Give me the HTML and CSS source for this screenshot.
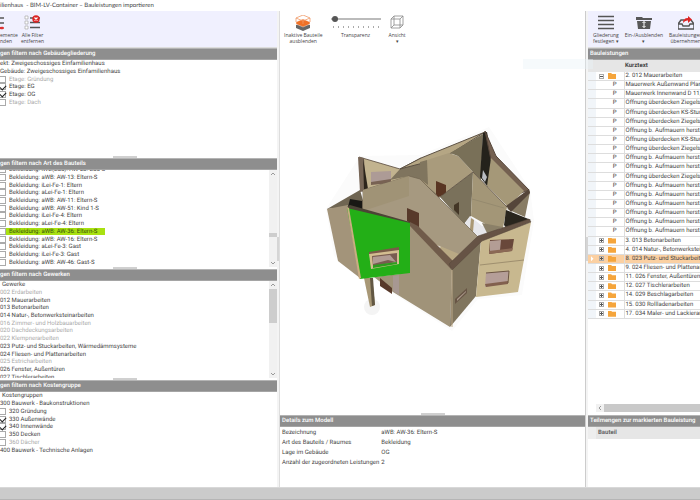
FILE: index.html
```html
<!DOCTYPE html>
<html lang="de">
<head>
<meta charset="utf-8">
<title>BIM-LV-Container – Bauleistungen importieren</title>
<link rel="stylesheet" href="styles.css">
</head>
<body>
<header class="titlebar">ilienhaus &nbsp;- BIM-LV-Container – Bauleistungen importieren</header>
<main class="workspace">
  <aside class="filters">
    <div class="toolbar toolbar-left">
      <button class="tool tool-cut" type="button">
        <svg class="icon" viewBox="0 0 16 16"><path d="M-4 3h8M-4 8h8" stroke="#555" stroke-width="1.5"/><path d="M-2 13h3" stroke="#555" stroke-width="1.5"/><path d="M0 12q4-1 4 1t-4 1z" fill="#d33"/></svg>
        <span>emente<br>nden</span>
      </button>
      <button class="tool" type="button">
        <svg class="icon" viewBox="0 0 16 16"><g fill="#fff" stroke="#aaa" stroke-width=".7"><path d="M1 1h3v3H1zM1 6h3v3H1zM1 11h3v3H1z"/></g><path d="M6 3h10M6 7.500h10M6 12.500h10" stroke="#555" stroke-width="1.500"/><circle cx="12" cy="4" r="3.700" fill="#dc2424"/><path d="M10.500 2.500l3 3m0-3l-3 3" stroke="#fff" stroke-width="1.200"/></svg>
        <span>Alle Filter<br>entfernen</span>
      </button>
    </div>
    <section class="panel">
      <h2>gen filtern nach Gebäudegliederung</h2>
      <div class="panel-body">
        <ul class="tree">
          <li>ekt: Zweigeschossiges Einfamilienhaus</li>
          <li>Gebäude: Zweigeschossiges Einfamilienhaus</li>
          <li class="off"><label><input type="checkbox">Etage: Gründung</label></li>
          <li><label><input type="checkbox" checked>Etage: EG</label></li>
          <li><label><input type="checkbox" checked>Etage: OG</label></li>
          <li class="off"><label><input type="checkbox">Etage: Dach</label></li>
        </ul>
      </div>
      <i class="grip"></i>
    </section>
    <section class="panel">
      <h2>gen filtern nach Art des Bauteils</h2>
      <div class="panel-body scrolled">
        <ul class="tree tree-long">
          <li><label><input type="checkbox">Bekleidung: iWB(Bad): AW-23: Bad-S</label></li>
          <li><label><input type="checkbox">Bekleidung: aWB: AW-13: Eltern-S</label></li>
          <li><label><input type="checkbox">Bekleidung: iLei-Fe-1: Eltern</label></li>
          <li><label><input type="checkbox">Bekleidung: aLei-Fe-1: Eltern</label></li>
          <li><label><input type="checkbox">Bekleidung: aWB: AW-11: Eltern-S</label></li>
          <li><label><input type="checkbox">Bekleidung: aWB: AW-51: Kind 1-S</label></li>
          <li><label><input type="checkbox">Bekleidung: iLei-Fe-4: Eltern</label></li>
          <li><label><input type="checkbox">Bekleidung: aLei-Fe-4: Eltern</label></li>
          <li><label class="marked"><input type="checkbox">Bekleidung: aWB: AW-36: Eltern-S</label></li>
          <li><label><input type="checkbox">Bekleidung: aWB: AW-16: Eltern-S</label></li>
          <li><label><input type="checkbox">Bekleidung: aLei-Fe-3: Gast</label></li>
          <li><label><input type="checkbox">Bekleidung: iLei-Fe-3: Gast</label></li>
          <li><label><input type="checkbox">Bekleidung: aWB: AW-46: Gast-S</label></li>
        </ul>
        <div class="scrollbar"><svg viewBox="0 0 8 8"><path d="M2 5l2-2 2 2"/></svg><div class="track"><b class="thumb thumb-low"></b></div><svg viewBox="0 0 8 8"><path d="M2 3l2 2 2-2"/></svg></div>
      </div>
      <i class="grip"></i>
    </section>
    <section class="panel">
      <h2>gen filtern nach Gewerken</h2>
      <div class="panel-body">
        <ul class="tree tree-long">
          <li class="root">Gewerke</li>
          <li class="off">002 Erdarbeiten</li>
          <li>012 Mauerarbeiten</li>
          <li>013 Betonarbeiten</li>
          <li>014 Natur-, Betonwerksteinarbeiten</li>
          <li class="off">016 Zimmer- und Holzbauarbeiten</li>
          <li class="off">020 Dachdeckungsarbeiten</li>
          <li class="off">022 Klempnerarbeiten</li>
          <li>023 Putz- und Stuckarbeiten, Wärmedämmsysteme</li>
          <li>024 Fliesen- und Plattenarbeiten</li>
          <li class="off">025 Estricharbeiten</li>
          <li>026 Fenster, Außentüren</li>
          <li>027 Tischlerarbeiten</li>
        </ul>
        <div class="scrollbar"><svg viewBox="0 0 8 8"><path d="M2 5l2-2 2 2"/></svg><div class="track"><b class="thumb"></b></div><svg viewBox="0 0 8 8"><path d="M2 3l2 2 2-2"/></svg></div>
      </div>
      <i class="grip"></i>
    </section>
    <section class="panel">
      <h2>gen filtern nach Kostengruppe</h2>
      <div class="panel-body">
        <ul class="tree tree-costs">
          <li class="root">Kostengruppen</li>
          <li>300 Bauwerk - Baukonstruktionen</li>
          <li><label><input type="checkbox">320 Gründung</label></li>
          <li><label><input type="checkbox" checked>330 Außenwände</label></li>
          <li><label><input type="checkbox" checked>340 Innenwände</label></li>
          <li><label><input type="checkbox">350 Decken</label></li>
          <li class="off"><label><input type="checkbox">360 Dächer</label></li>
          <li>400 Bauwerk - Technische Anlagen</li>
        </ul>
      </div>
    </section>
  </aside>

  <div class="splitter"></div>

  <section class="model">
    <div class="toolbar toolbar-model">
      <button class="tool" type="button">
        <svg class="icon" viewBox="0 0 16 16"><path d="M1 10l7-2 7 2v3l-7 3-7-3z" fill="#666"/><path d="M1 7l7-3 7 3v2l-7 3-7-3z" fill="#ef7127" stroke="#fff" stroke-width=".4"/><path d="M1 3l7-3 7 3-7 3zM1 3v4M15 3v4M8 6v3" fill="none" stroke="#f09a68" stroke-width=".8"/></svg>
        <span>Inaktive Bauteile<br>ausblenden</span>
      </button>
      <label class="tool range"><input type="range" min="0" max="100" value="4"><i class="ticks"></i><span>Transparenz</span></label>
      <button class="tool tool-view" type="button">
        <svg class="icon" viewBox="0 0 16 16"><path d="M2 4h9v9H2zM5 1h9v9H5zM2 4l3-3M11 4l3-3M2 13l3-3M11 13l3-3" fill="none" stroke="#888" stroke-width=".8"/></svg>
        <span>Ansicht<br><em>▾</em></span>
      </button>
    </div>
    <div class="viewport">
      <svg class="house" viewBox="320 120 220 220" role="img" aria-label="Gebäudemodell">
        <path d="M334 256L452 331 478 299 522 295 534 221 530 189 489 127 420 155 360 156 326 209z" fill="#fbfbfb"/>
        <circle cx="372" cy="307" r="8" fill="#f4f4f4"/>
        <g stroke-linejoin="round">
          <path d="M359 157L400 169 430 156 430 190 363 194z" fill="#c2b38f"/>
          <path d="M359 157L400 169 421 158" fill="none" stroke="#55463a" stroke-width=".8"/>
          <path d="M371 172l20-1v9l-20 3z" fill="#ad9b96"/><path d="M371 182l20-3v4l-20 2z" fill="#786253"/>
          <path d="M358 157l6 1 2 33-6 1z" fill="#786758"/><path d="M363 158l5 31-4 1z" fill="#2c251c"/>
          <path d="M390 180L400 169 430 157 450 153 440 198 409 176z" fill="#7f745e"/>
          <path d="M400 169L421 158 485 132 450 154 427 162z" fill="#b5a684" stroke="#5c5144"/>
          <path d="M427 160L449 153 458 156 473 172 440 197 420 180z" fill="#a99b7c"/>
          <path d="M420 162l7-2 1 25-8-6z" fill="#80755e"/>
          <path d="M450 153L483 134 481 180 473 172 458 156z" fill="#797058"/>
          <path d="M483 133L487 132 492 160 488 187 480 177z" fill="#24221b"/>
          <path d="M485 131L496 156 529 190 521 193 491 160z" fill="#746050" stroke="#55463a"/>
          <path d="M491 158L524 191 508 207 487 186z" fill="#a59878"/>
          <path d="M436 181l10 4v9l-8 3-2-3z" fill="#593522"/>
          <path d="M440 197L473 172 471 216 464 224z" fill="#7a715b"/>
          <path d="M454 205l5-3v13l-5-5z" fill="#433626"/>
          <path d="M473 172L507 207 503 228 489 226 471 216z" fill="#a39677"/>
          <path d="M440 197L473 172 507 207" fill="none" stroke="#5c4e40" stroke-width=".8"/>
          <path d="M472 199L504 208" stroke="#8c8168" stroke-width=".6"/>
          <path d="M464 224L470 216 482 226 502 229 480 238z" fill="#e7e7ea"/>
          <path d="M471 218l3 2-1 12-3-3z" fill="#aa9873"/><path d="M482 223L503 227 488 235z" fill="#8b8068"/>
          <path d="M529 190L530 192 525 217 507 209z" fill="#887c64"/>
          <path d="M506 206L529 189 530 193 511 212z" fill="#55463a"/>
          <path d="M506 210L531 220 507 229 504 225z" fill="#29251d"/>
          <path d="M483 170l4 7-2 5-3-4z" fill="#b9bcc2"/>
          <path d="M327 209L360 190 366 211 347 207z" fill="#6f6552"/>
          <path d="M327 209L348 205 360 278 338 261z" fill="#a3947a"/>
          <path d="M363 190L409 176 420 179 478 237 452 268 410 224 363 211z" fill="#a69980" stroke="#70634f" stroke-width=".7"/>
          <path d="M363 190l46-14v20l-46 15z" fill="#a09376"/>
          <path d="M350 199l12 2v10l-14-4z" fill="#191814"/>
          <path d="M407 208l12 5v16l-12-8z" fill="#57392a"/>
          <path d="M432 242L440 246 459 254 453 262z" fill="#b9a984"/><path d="M432 243l9 4-2 1z" fill="#eee"/>
          <path d="M374 277L400 274 409 223 452 269 450 327 393 292z" fill="#a09379"/>
          <path d="M380 278l12 10v6l-12-8z" fill="#57392a"/><path d="M393 276l6-1v20l-6-4z" fill="#a79892"/>
          <path d="M410 222L418 226 455 263 451 269 409 225z" fill="#705b4a"/>
          <path d="M364 278h8l3 27-5 2z" fill="#a89876"/><path d="M370 278h3l2 27-3 1z" fill="#625743"/>
          <path d="M347 207L350 205 410 222 409 225 350 210z" fill="#4c4436"/>
          <path d="M347 208L410 223 410 273 360 279z" fill="#23af17"/>
          <path d="M347 207l2 1 12 70-2 1z" fill="#c9ad82"/>
          <path d="M369 252l30-5v4l-30 4z" fill="#795b48"/>
          <path d="M369 254l30-4v14l-28 5z" fill="#d3bd91"/><path d="M372 256l25-3v9l-24 4z" fill="#795c51"/><path d="M373 257l17-2 6 7-8-2-15 4z" fill="#b19b94"/><path d="M373 265l24-3v2l-24 4z" fill="#2c9c1e"/>
          <path d="M452 269L481 240 476 296 450 327z" fill="#80755e"/>
          <path d="M452 269v58" stroke="#bca988"/>
          <path d="M481 240L531 222 518 292 476 297z" fill="#c8b88f"/>
          <path d="M480 265L524 260" stroke="#8d7d60" stroke-width=".7"/>
          <path d="M449 264L478 236 529 219 531 222 482 241 452 270z" fill="#665345" stroke="#55463a" stroke-width=".5"/>
          <path d="M490 240l24-1-2 12-23 3z" fill="#69483a"/><path d="M490 241l11-1-1 10-10 3z" fill="#b39d95"/><path d="M489 251l24-3-1 3-23 3z" fill="#8b6955"/>
          <path d="M486 273l23-2-2 12-22 4z" fill="#b59e98"/><path d="M485 284l23-3v3l-22 3z" fill="#82604e"/><path d="M486 273l23-2-1 12" fill="none" stroke="#6c5543"/>
          <path d="M455 299l12-11v5l-12 11z" fill="#675545"/><path d="M457 301l9-9v-1l-9 8z" fill="#aa988a"/>
        </g>
      </svg>
      <i class="ghost"></i>
      <i class="grip grip-mid"></i>
    </div>
    <div class="details">
      <h2>Details zum Modell</h2>
      <dl>
        <dt>Bezeichnung</dt><dd>aWB: AW-36: Eltern-S</dd>
        <dt>Art des Bauteils / Raumes</dt><dd>Bekleidung</dd>
        <dt>Lage im Gebäude</dt><dd>OG</dd>
        <dt>Anzahl der zugeordneten Leistungen</dt><dd>2</dd>
      </dl>
    </div>
  </section>

  <div class="splitter splitter-right"></div>

  <aside class="services">
    <div class="toolbar toolbar-right">
      <button class="tool" type="button">
        <svg class="icon" viewBox="0 0 16 16"><path d="M0 1.500h16M0 5.500h16M0 9.500h16M0 13.500h16" stroke="#555" stroke-width="1.600"/></svg>
        <span>Gliederung<br>festlegen <em>▾</em></span>
      </button>
      <button class="tool" type="button">
        <svg class="icon" viewBox="0 0 16 16"><path d="M0 2h6l1 1h9v2H0zM1 6h14l-1 8H2z" fill="#585858"/><path d="M8 6.500v6M6.500 8L8 6.500 9.500 8M6.500 11L8 12.500 9.500 11" stroke="#fff" fill="none"/></svg>
        <span>Ein-/Ausblenden<br><em>▾</em></span>
      </button>
      <button class="tool" type="button">
        <svg class="icon" viewBox="0 0 16 16"><path d="M0 9l3-4h3M0 9v5h16V9l-3-4M0 9h4l1 2h6l1-2h4" fill="none" stroke="#555" stroke-width="1.500"/><path d="M5 8q0-5 5-5V1l4 3.500L10 8V5.500Q7 5 5 8z" fill="#dc2424"/></svg>
        <span>Bauleistungen<br>übernehmen</span>
      </button>
    </div>
    <h2>Bauleistungen</h2>
    <div class="table-area">
      <table>
        <thead><tr><th></th><th></th><th></th><th>Kurztext</th></tr></thead>
        <tbody>
          <tr class="group"><td></td><td><button class="toggle" type="button" aria-label="Zuklappen"></button></td><td><i class="folder"></i></td><td>2. 012 Mauerarbeiten</td></tr>
          <tr><td></td><td></td><td>P</td><td>Mauerwerk Außenwand Planziegel</td></tr>
          <tr><td></td><td></td><td>P</td><td>Mauerwerk Innenwand D 11,5 cm</td></tr>
          <tr><td></td><td></td><td>P</td><td>Öffnung überdecken Ziegelsturz</td></tr>
          <tr><td></td><td></td><td>P</td><td>Öffnung überdecken KS-Sturz</td></tr>
          <tr><td></td><td></td><td>P</td><td>Öffnung überdecken Ziegelsturz</td></tr>
          <tr><td></td><td></td><td>P</td><td>Öffnung b. Aufmauern herst. IW</td></tr>
          <tr><td></td><td></td><td>P</td><td>Öffnung überdecken KS-Sturz</td></tr>
          <tr><td></td><td></td><td>P</td><td>Öffnung überdecken Ziegelsturz</td></tr>
          <tr><td></td><td></td><td>P</td><td>Öffnung b. Aufmauern herst. IW</td></tr>
          <tr><td></td><td></td><td>P</td><td>Öffnung b. Aufmauern herst. IW</td></tr>
          <tr><td></td><td></td><td>P</td><td>Öffnung überdecken Ziegelsturz</td></tr>
          <tr><td></td><td></td><td>P</td><td>Öffnung b. Aufmauern herst. IW</td></tr>
          <tr><td></td><td></td><td>P</td><td>Öffnung b. Aufmauern herst. IW</td></tr>
          <tr><td></td><td></td><td>P</td><td>Öffnung b. Aufmauern herst. IW</td></tr>
          <tr><td></td><td></td><td>P</td><td>Öffnung b. Aufmauern herst. IW</td></tr>
          <tr><td></td><td></td><td>P</td><td>Öffnung b. Aufmauern herst. IW</td></tr>
          <tr><td></td><td></td><td>P</td><td>Öffnung b. Aufmauern herst. IW</td></tr>
          <tr class="group"><td></td><td><button class="toggle closed" type="button" aria-label="Aufklappen"></button></td><td><i class="folder"></i></td><td>3. 013 Betonarbeiten</td></tr>
          <tr class="group"><td></td><td><button class="toggle closed" type="button" aria-label="Aufklappen"></button></td><td><i class="folder"></i></td><td>4. 014 Natur-, Betonwerksteinarbeiten</td></tr>
          <tr class="group current"><td><i class="pointer"></i></td><td><button class="toggle closed" type="button" aria-label="Aufklappen"></button></td><td><i class="folder"></i></td><td>8. 023 Putz- und Stuckarbeiten</td></tr>
          <tr class="group"><td></td><td><button class="toggle closed" type="button" aria-label="Aufklappen"></button></td><td><i class="folder"></i></td><td>9. 024 Fliesen- und Plattenarbeiten</td></tr>
          <tr class="group"><td></td><td><button class="toggle closed" type="button" aria-label="Aufklappen"></button></td><td><i class="folder"></i></td><td>11. 026 Fenster, Außentüren</td></tr>
          <tr class="group"><td></td><td><button class="toggle closed" type="button" aria-label="Aufklappen"></button></td><td><i class="folder"></i></td><td>12. 027 Tischlerarbeiten</td></tr>
          <tr class="group"><td></td><td><button class="toggle closed" type="button" aria-label="Aufklappen"></button></td><td><i class="folder"></i></td><td>14. 029 Beschlagarbeiten</td></tr>
          <tr class="group"><td></td><td><button class="toggle closed" type="button" aria-label="Aufklappen"></button></td><td><i class="folder"></i></td><td>15. 030 Rollladenarbeiten</td></tr>
          <tr class="group"><td></td><td><button class="toggle closed" type="button" aria-label="Aufklappen"></button></td><td><i class="folder"></i></td><td>17. 034 Maler- und Lackierarbeiten</td></tr>
        </tbody>
      </table>
      <div class="hscroll"><svg viewBox="0 0 8 8"><path d="M5 2L3 4l2 2"/></svg><b></b></div>
    </div>
    <div class="parts">
      <h2>Teilmengen zur markierten Bauleistung</h2>
      <div class="parts-head">Bauteil</div>
    </div>
  </aside>
</main>
<footer class="statusbar"></footer>
</body>
</html>
```

FILE: styles.css
```css
* { box-sizing: border-box; }
body {
  margin: 0;
  height: 100vh;
  display: flex;
  flex-direction: column;
  overflow: hidden;
  background: #fff;
  color: #444;
  font: 6px/8px Roboto, "Liberation Sans", sans-serif;
  text-rendering: geometricPrecision;
  white-space: nowrap;
}
h2, ul, dl, dd { margin: 0; padding: 0; }
ul { list-style: none; }
button { border: 0; background: none; padding: 0; color: inherit; font: inherit; text-rendering: inherit; }
em { font-style: normal; }

.titlebar { flex: 0 0 11px; font: 6px/11px Lato, sans-serif; }
.workspace { flex: 1; min-height: 0; display: grid; grid-template-columns: 277px 3px minmax(0, 1fr) 3px 112px; }
.statusbar { flex: 0 0 13px; background: #cbcbcb; border-top: 1px solid #d8d8d8; border-bottom: 1px solid #b5b5b5; }

h2 {
  height: 12px;
  border-top: 1px solid #b4b4b4;
  border-bottom: 1px solid #a5a5a5;
  background: #8e8e8e;
  color: #fff;
  font-size: 6px;
  font-weight: 500;
  line-height: 10px;
  overflow: hidden;
}

/* Toolbars */
.toolbar { flex: 0 0 37px; height: 37px; display: flex; align-items: flex-start; padding-top: 4px; font: 5px/6px "Open Sans", sans-serif; text-rendering: auto; overflow: hidden; }
.tool { display: flex; flex-direction: column; align-items: center; gap: 1px; text-align: center; }
.icon { width: 16px; height: 16px; display: block; }
.toolbar-left, .toolbar-right { background: #f0f0fe; border-bottom: 1px solid #ddd; }
.toolbar-left { gap: 3px; }
.tool-cut { align-items: flex-start; text-align: left; }
.toolbar-model { padding-left: 4px; gap: 8px; }
.toolbar-right { padding-left: 5px; gap: 6px; }
.range { width: 50px; }
.range input { appearance: none; width: 50px; height: 8px; margin: 0; padding: 0; background: linear-gradient(#bbb, #bbb) center / 100% 2px no-repeat; }
.range input::-webkit-slider-thumb { appearance: none; width: 6px; height: 6px; border-radius: 50%; background: #555; }
.ticks { width: 46px; height: 2px; margin: 2px 0 3px; background: repeating-linear-gradient(90deg, #aaa 0 1px, transparent 1px 5px); }

/* Filter panels */
.filters { min-width: 0; min-height: 0; display: grid; grid-template-rows: 37px 110fr 111fr 111fr 107fr; }
.panel { position: relative; min-height: 0; display: flex; flex-direction: column; }
.panel h2 { flex: none; }
.panel-body { flex: 1; min-height: 0; display: flex; justify-content: space-between; overflow: hidden; margin-bottom: 2px; }
.scrolled { align-items: flex-end; }
.tree { flex: none; display: grid; grid-auto-rows: 1fr; height: 46px; align-items: center; }
.tree-long { height: 100px; }
.scrolled .tree-long { margin-bottom: 1px; }
.tree-costs { height: 62px; }
.tree li { line-height: 7px; }
.tree label { display: flex; align-items: center; gap: 3px; }
.tree input { appearance: none; flex: none; width: 7px; height: 7px; margin: 0 0 0 -1px; border: 1px solid #aaa; background: #fff; display: grid; place-items: center; }
.tree input:checked::before { content: ""; width: 5px; height: 3px; border: solid #222; border-width: 0 0 1px 1px; transform: rotate(-45deg); }
.root { padding-left: 2px; }
.off { color: #aaa; }
.marked { background: #a9e111; color: #34500a; }
.grip { position: absolute; z-index: 1; left: 50%; bottom: 0; width: 24px; height: 2px; margin-left: -26px; background: #d0d0d0; }
.grip-mid { margin-left: -12px; }
.scrollbar { align-self: stretch; width: 8px; display: flex; flex-direction: column; background: #f1f1f1; }
.scrollbar svg, .hscroll svg { flex: none; width: 8px; height: 8px; fill: none; stroke: #999; }
.track { flex: 1; display: flex; flex-direction: column; }
.thumb { height: 42%; background: #cdcdcd; }
.thumb-low { height: 4px; margin-top: auto; margin-bottom: 22px; }

.splitter { background: #f4f4f4; border-right: 1px solid #ddd; display: flex; align-items: center; }
.splitter::before { content: ""; width: 3px; height: 24px; background: #d5d5d5; }
.splitter-right { border-right: 0; border-left: 1px solid #ccc; }

/* Model view */
.model { min-width: 0; min-height: 0; display: flex; flex-direction: column; }
.viewport { position: relative; flex: 1; min-height: 0; display: flex; justify-content: center; align-items: flex-start; padding-top: 72px; }
.house { width: 220px; height: 220px; flex: none; margin-right: 5px; }
.ghost { position: absolute; right: -8px; top: 11px; width: 70px; height: 10px; background: #e8f2f8; opacity: .4; }
.details { flex: 0 0 72px; }
.details h2, .services h2 { padding-left: 2px; }
dl { display: grid; grid-template-columns: max-content 1fr; column-gap: 2px; padding: 1px 2px; line-height: 10px; }

/* Services list */
.services { min-width: 0; min-height: 0; display: flex; flex-direction: column; overflow: hidden; }
.services h2 { flex: none; }
.table-area { flex: 1; min-height: 0; display: flex; flex-direction: column; justify-content: space-between; overflow: hidden; }
table { table-layout: fixed; width: 152px; height: 259px; border-collapse: collapse; }
th { height: 12px; padding: 0; background: #e6e6e6; text-align: left; }
td { padding: 0; border-bottom: 1px solid #ddd; line-height: 8px; overflow: hidden; }
th:nth-child(1) { width: 8px; }
th:nth-child(2) { width: 10px; }
th:nth-child(3) { width: 18px; }
td:nth-child(1) { background: #f1f5f9; }
td:nth-child(3) { text-align: center; border-right: 1px solid #ddd; }
td:nth-child(4), th:nth-child(4) { padding-left: 1px; }
.toggle { display: block; width: 5px; height: 5px; margin: 0 auto; border: 1px solid #aaa; background: linear-gradient(#555, #555) center / 3px 1px no-repeat; }
.closed { background: linear-gradient(#555, #555) center / 3px 1px no-repeat, linear-gradient(#555, #555) center / 1px 3px no-repeat; }
.folder { display: block; width: 8px; height: 6px; margin: 0 auto 0 2px; background: #f5a53c; clip-path: polygon(0 0, 40% 0, 50% 17%, 100% 17%, 100% 100%, 0 100%); }
.current td { background: #fbd0a2; }
.pointer { display: block; width: 3px; height: 6px; margin: 0 auto; background: #fff; clip-path: polygon(0 0, 100% 50%, 0 100%); }
.hscroll { display: flex; height: 8px; margin: 0 0 3px 8px; background: #f1f1f1; }
.hscroll b { flex: 1; background: #c9c9c9; }
.parts { flex: 0 0 72px; }
.parts-head { height: 12px; padding-left: 2px; border-left: 8px solid #eee; background: #e6e6e6; font-weight: bold; line-height: 12px; color: #666; }
```
